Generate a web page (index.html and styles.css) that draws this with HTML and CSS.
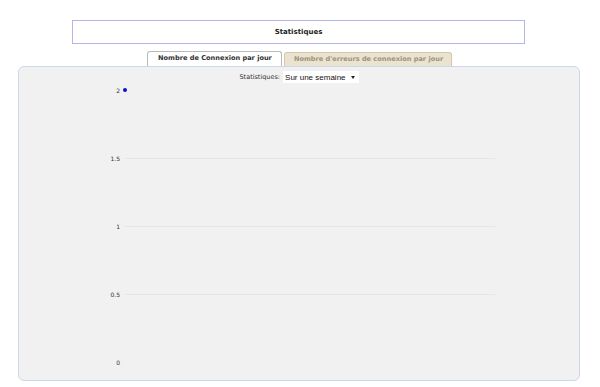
FILE: index.html
```html
<!DOCTYPE html>
<html lang="fr">
<head>
    <meta charset="UTF-8">
    <meta name="viewport" content="width=device-width, initial-scale=1.0">
    <title>Statistiques</title>
    <link rel="stylesheet" href="styles.css">
</head>
<body>
<div class="page-title">Statistiques</div>
<ul class="tabs">
    <li class="tab active">Nombre de Connexion par jour</li>
    <li class="tab">Nombre d'erreurs de connexion par jour</li>
</ul>
<div class="panel">
    <div class="filter">
        <label for="period">Statistiques:</label>
        <div class="select" id="period">Sur une semaine <span class="caret"></span></div>
    </div>
    <svg class="chart" width="560" height="295" viewBox="0 0 560 295">
        <g class="grid">
            <line x1="106" y1="73.5" x2="476" y2="73.5"/>
            <line x1="106" y1="141.5" x2="476" y2="141.5"/>
            <line x1="106" y1="209.5" x2="476" y2="209.5"/>
        </g>
        <g class="axis">
            <text x="101" y="7.5">2</text>
            <text x="101" y="75.5">1.5</text>
            <text x="101" y="143.5">1</text>
            <text x="101" y="211.5">0.5</text>
            <text x="101" y="279.5">0</text>
        </g>
        <circle cx="106" cy="5" r="2" fill="#1010c8"/>
    </svg>
</div>
</body>
</html>
```

FILE: styles.css
```css
body {
    margin: 0;
    background-color: #fff;
    font-family: "DejaVu Sans", Verdana, sans-serif;
    color: #222;
}
.page-title {
    margin: 20px 0 0 72px;
    width: 451px;
    height: 22px;
    line-height: 22px;
    border: 1px solid #b4b4ee;
    text-align: center;
    font-size: 7px;
    font-weight: bold;
}
.tabs {
    list-style: none;
    margin: 8px 0 0 0;
    padding: 0 0 0 147px;
    display: flex;
    gap: 2px;
}
.tab {
    height: 13px;
    line-height: 13px;
    padding: 0 8px 0 9px;
    font-size: 6.6px;
    font-weight: bold;
    border: 1px solid #d2c9ad;
    border-bottom: none;
    border-radius: 3px 3px 0 0;
    background-color: #e9e3cf;
    color: #a0947a;
}
.tab.active {
    padding: 0 9px 0 10px;
    background-color: #fff;
    border-color: #b9b9b9;
    color: #333;
    height: 14px;
    margin-top: -1px;
}
.panel {
    margin: 0 20px 0 18px;
    height: 313px;
    border: 1px solid #ccd7ef;
    border-radius: 6px;
    background-color: #f1f1f1;
    overflow: hidden;
}
.filter {
    height: 16px;
    display: flex;
    justify-content: center;
    align-items: center;
    gap: 3px;
    padding-top: 2px;
    font-size: 6.5px;
    color: #333;
}
.select {
    display: flex;
    align-items: center;
    gap: 5px;
    height: 12px;
    padding: 0 4px 0 2px;
    background-color: #fff;
    font-family: "Liberation Sans", Arial, sans-serif;
    font-size: 8px;
    color: #111;
}
.caret {
    width: 0;
    height: 0;
    border-left: 2.5px solid transparent;
    border-right: 2.5px solid transparent;
    border-top: 3px solid #222;
}
.chart {
    display: block;
}
.grid line {
    stroke: #e6e6e6;
    stroke-width: 1;
}
.axis text {
    font-size: 6px;
    fill: #333;
    text-anchor: end;
}
```
